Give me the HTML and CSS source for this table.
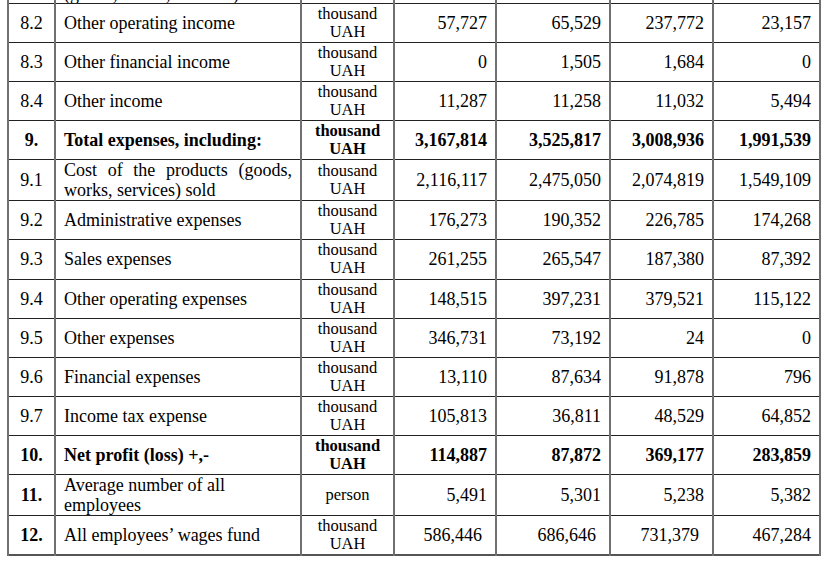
FILE: index.html
```html
<!DOCTYPE html>
<html>
<head>
<meta charset="utf-8">
<link rel="stylesheet" href="styles.css">
</head>
<body>
<table class="fin">
  <colgroup>
    <col class="c-no"><col class="c-name"><col class="c-unit"><col class="c-v1"><col class="c-v2"><col class="c-v3"><col class="c-v4">
  </colgroup>
  <tbody>
    <tr class="r partial">
      <td class="no"></td>
      <td class="name pline">Net income from sales<br>(goods, works, services)</td>
      <td class="unit"></td>
      <td class="val"></td><td class="val"></td><td class="val"></td><td class="val"></td>
    </tr>
    <tr class="r">
      <td class="no">8.2</td>
      <td class="name">Other operating income</td>
      <td class="unit">thousand<br>UAH</td>
      <td class="val">57,727</td><td class="val">65,529</td><td class="val">237,772</td><td class="val">23,157</td>
    </tr>
    <tr class="r">
      <td class="no">8.3</td>
      <td class="name">Other financial income</td>
      <td class="unit">thousand<br>UAH</td>
      <td class="val">0</td><td class="val">1,505</td><td class="val">1,684</td><td class="val">0</td>
    </tr>
    <tr class="r">
      <td class="no">8.4</td>
      <td class="name">Other income</td>
      <td class="unit">thousand<br>UAH</td>
      <td class="val">11,287</td><td class="val">11,258</td><td class="val">11,032</td><td class="val">5,494</td>
    </tr>
    <tr class="r bold">
      <td class="no">9.</td>
      <td class="name">Total expenses, including:</td>
      <td class="unit">thousand<br>UAH</td>
      <td class="val">3,167,814</td><td class="val">3,525,817</td><td class="val">3,008,936</td><td class="val">1,991,539</td>
    </tr>
    <tr class="r tall">
      <td class="no">9.1</td>
      <td class="name just">Cost of the products (goods, works, services) sold</td>
      <td class="unit">thousand<br>UAH</td>
      <td class="val">2,116,117</td><td class="val">2,475,050</td><td class="val">2,074,819</td><td class="val">1,549,109</td>
    </tr>
    <tr class="r">
      <td class="no">9.2</td>
      <td class="name">Administrative expenses</td>
      <td class="unit">thousand<br>UAH</td>
      <td class="val">176,273</td><td class="val">190,352</td><td class="val">226,785</td><td class="val">174,268</td>
    </tr>
    <tr class="r h40">
      <td class="no">9.3</td>
      <td class="name">Sales expenses</td>
      <td class="unit">thousand<br>UAH</td>
      <td class="val">261,255</td><td class="val">265,547</td><td class="val">187,380</td><td class="val">87,392</td>
    </tr>
    <tr class="r">
      <td class="no">9.4</td>
      <td class="name">Other operating expenses</td>
      <td class="unit">thousand<br>UAH</td>
      <td class="val">148,515</td><td class="val">397,231</td><td class="val">379,521</td><td class="val">115,122</td>
    </tr>
    <tr class="r">
      <td class="no">9.5</td>
      <td class="name">Other expenses</td>
      <td class="unit">thousand<br>UAH</td>
      <td class="val">346,731</td><td class="val">73,192</td><td class="val">24</td><td class="val">0</td>
    </tr>
    <tr class="r">
      <td class="no">9.6</td>
      <td class="name">Financial expenses</td>
      <td class="unit">thousand<br>UAH</td>
      <td class="val">13,110</td><td class="val">87,634</td><td class="val">91,878</td><td class="val">796</td>
    </tr>
    <tr class="r">
      <td class="no">9.7</td>
      <td class="name">Income tax expense</td>
      <td class="unit">thousand<br>UAH</td>
      <td class="val">105,813</td><td class="val">36,811</td><td class="val">48,529</td><td class="val">64,852</td>
    </tr>
    <tr class="r bold">
      <td class="no">10.</td>
      <td class="name">Net profit (loss) +,-</td>
      <td class="unit">thousand<br>UAH</td>
      <td class="val">114,887</td><td class="val">87,872</td><td class="val">369,177</td><td class="val">283,859</td>
    </tr>
    <tr class="r">
      <td class="no b">11.</td>
      <td class="name tight">Average number of all<br>employees</td>
      <td class="unit">person</td>
      <td class="val">5,491</td><td class="val">5,301</td><td class="val">5,238</td><td class="val">5,382</td>
    </tr>
    <tr class="r h40">
      <td class="no b">12.</td>
      <td class="name">All employees’ wages fund</td>
      <td class="unit">thousand<br>UAH</td>
      <td class="val wide">586,446</td><td class="val wide">686,646</td><td class="val wide">731,379</td><td class="val">467,284</td>
    </tr>
  </tbody>
</table>
</body>
</html>
```

FILE: styles.css
```css
html, body {
  margin: 0;
  padding: 0;
  background: #ffffff;
}

body {
  overflow: hidden;
  height: 562px;
}

.fin {
  margin: -37px 0 0 7px;
  border-collapse: collapse;
  table-layout: fixed;
  width: 812px;
  font-family: "Liberation Serif", "Times New Roman", serif;
  font-size: 18px;
  color: #000;
  border: 2px solid #555;
}

.c-no { width: 47px; }
.c-name { width: 246px; }
.c-unit { width: 93px; }
.c-v1 { width: 102px; }
.c-v2 { width: 114px; }
.c-v3 { width: 103px; }
.c-v4 { width: 107px; }

.r { height: 39px; }
.r.tall { height: 41px; }
.r.h40 { height: 40px; }

.fin td {
  padding: 0;
  vertical-align: middle;
  border-top: 1px solid #222;
  border-bottom: 1px solid #222;
  border-left: 2px solid #707070;
  border-right: 2px solid #707070;
  line-height: 20px;
  overflow: hidden;
  white-space: nowrap;
}

.no {
  text-align: center;
}

.no.b {
  font-weight: bold;
}

.name {
  text-align: left;
  padding-left: 8px !important;
  padding-right: 8px !important;
}

.name.pline {
  line-height: 18px;
  vertical-align: bottom;
}

.name.just {
  white-space: normal !important;
  text-align: justify;
  text-align-last: left;
  line-height: 20px;
}

.name.tight {
  line-height: 20px;
}

.unit {
  text-align: center;
  font-size: 16.5px;
  line-height: 18px !important;
}

.val {
  text-align: right;
  padding-right: 8px !important;
}

.val.wide {
  padding-right: 13px !important;
}

.bold td {
  font-weight: bold;
}
```
